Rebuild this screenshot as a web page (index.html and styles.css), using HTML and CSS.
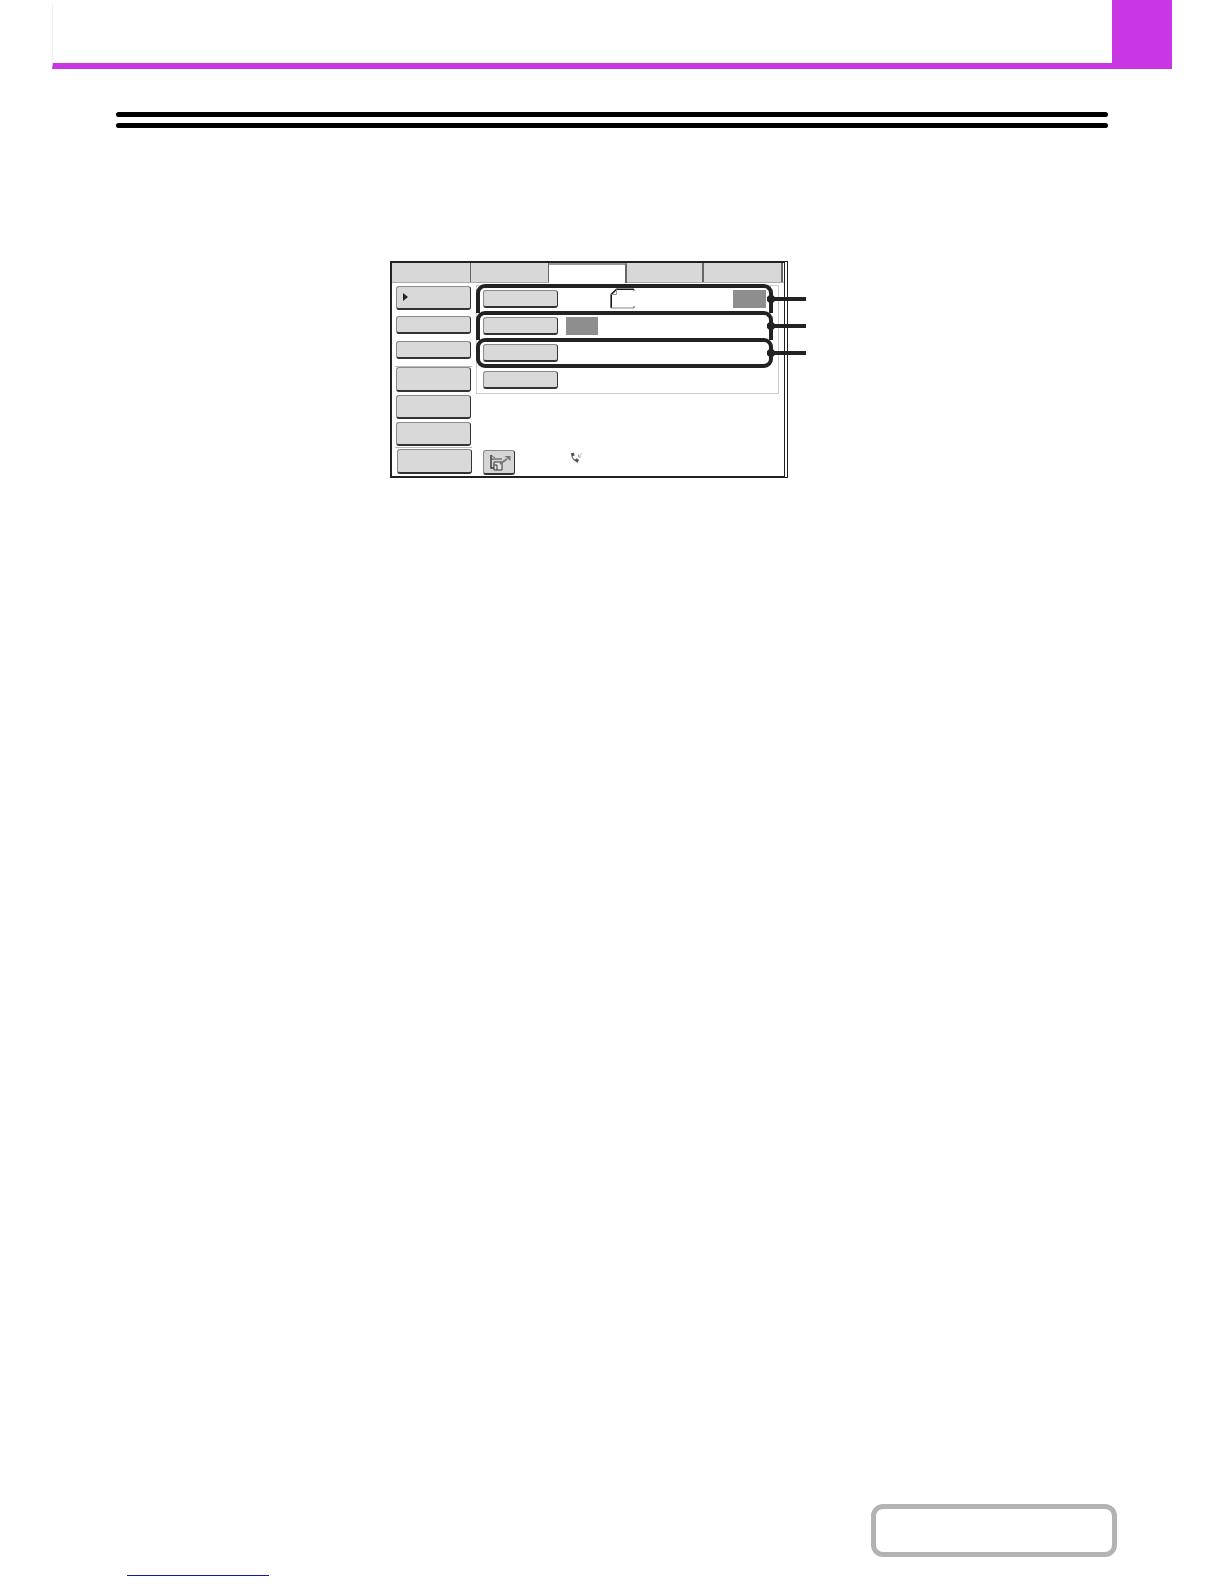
FILE: index.html
```html
<!DOCTYPE html>
<html lang="en">
<head>
<meta charset="utf-8">
<title>Screen</title>
<link rel="stylesheet" href="styles.css">
</head>
<body>
<header class="page-head">
  <div class="head-main"></div>
  <div class="head-tab"></div>
</header>
<div class="rule"></div>
<div class="rule rule-second"></div>

<section class="panel">
  <div class="tabs">
    <div class="tab tab-first"></div>
    <div class="tab tab-second"></div>
    <div class="tab tab-active"></div>
    <div class="tab tab-fourth"></div>
    <div class="tab tab-fifth"></div>
  </div>
  <div class="panel-body">
    <aside class="side">
      <div class="btn side-btn side-tall side-selected"><span class="arrow"></span></div>
      <div class="btn side-btn side-short gap-6"></div>
      <div class="btn side-btn side-short gap-7"></div>
      <div class="side-sep sep-one"></div>
      <div class="btn side-btn side-large"></div>
      <div class="btn side-btn side-tall gap-3"></div>
      <div class="btn side-btn side-tall gap-3"></div>
      <div class="side-sep sep-two"></div>
      <div class="btn side-btn side-last"></div>
    </aside>
    <div class="main">
      <div class="list">
        <div class="row">
          <div class="btn row-btn"></div>
          <svg class="paper" width="25" height="21" viewBox="0 0 25 21" aria-hidden="true">
            <path d="M1.2 20V6.5L6.5 1.2H24" fill="none" stroke="#1a1a1a" stroke-width="1.6"/>
            <path d="M6.5 1.5V6.5H1.5" fill="none" stroke="#999" stroke-width="1"/>
            <path d="M1 20H24" fill="none" stroke="#888" stroke-width="1"/>
            <path d="M24 1V3M24 18V20" fill="none" stroke="#555" stroke-width="1"/>
          </svg>
          <div class="fill fill-end"></div>
        </div>
        <div class="row">
          <div class="btn row-btn"></div>
          <div class="fill fill-start"></div>
        </div>
        <div class="row">
          <div class="btn row-btn"></div>
        </div>
        <div class="row">
          <div class="btn row-btn"></div>
        </div>
      </div>
      <div class="actions">
        <div class="btn icon-btn">
          <svg width="32" height="24" viewBox="0 0 32 24" aria-hidden="true">
            <path d="M8 5V18H11" fill="none" stroke="#333" stroke-width="1.4"/>
            <path d="M8 9H19" fill="none" stroke="#444" stroke-width="1"/>
            <path d="M8 5L12 8" fill="none" stroke="#666" stroke-width="1"/>
            <path d="M11 12H19V20H11Z" fill="#e6e6e6" stroke="#333" stroke-width="1"/>
            <path d="M11 15H14V20" fill="none" stroke="#333" stroke-width="1"/>
            <path d="M17 14L24 9" stroke="#777" stroke-width="2"/>
            <path d="M21.5 6H27.5V11Z" fill="#777"/>
          </svg>
        </div>
        <svg class="phone" width="13" height="12" viewBox="0 0 13 12" aria-hidden="true">
          <path d="M2 2C1 5 4 9 7.5 9.5" fill="none" stroke="#777" stroke-width="1.4"/>
          <path d="M0.6 1.5L3.5 0.4L4.8 3.2L2.5 4.6Z" fill="#555"/>
          <path d="M4.5 8L6.5 6.2L9 8L7.5 11Z" fill="#555"/>
          <path d="M12 1.5L8.5 5M8.5 2.5V5H11" fill="none" stroke="#999" stroke-width="0.8"/>
        </svg>
      </div>
    </div>
  </div>
  <div class="frame frame-one"></div>
  <div class="frame frame-two"></div>
  <div class="frame frame-three"></div>
  <div class="lead lead-one"></div>
  <div class="lead lead-two"></div>
  <div class="lead lead-three"></div>
</section>

<footer class="page-foot">
  <div class="foot-link"></div>
  <div class="foot-box"></div>
</footer>
</body>
</html>
```

FILE: styles.css
```css
* {
  box-sizing: border-box;
}

html,
body {
  margin: 0;
  padding: 0;
  background: #fff;
}

body {
  width: 1224px;
  height: 1584px;
  overflow: hidden;
  font-family: "Liberation Sans", Arial, sans-serif;
}

/* Page header */
.page-head {
  display: flex;
  width: 1120px;
  height: 69px;
  margin-left: 52px;
}

.head-main {
  flex: 1;
  margin-top: 4px;
  border-left: 1px solid #eee;
  border-bottom: 6px solid #c936e3;
}

.head-tab {
  width: 60px;
  background: #c936e3;
}

/* Heading rules */
.rule {
  width: 992px;
  height: 5px;
  margin: 43px 0 0 116px;
  border-radius: 3px;
  background: #000;
}

.rule-second {
  margin-top: 6px;
}

/* Screen panel */
.panel {
  position: relative;
  width: 398px;
  height: 217px;
  margin: 133px 0 0 390px;
  border: 2px solid #222;
  border-right: 4px double #222;
}

.tabs {
  display: flex;
  height: 20px;
  border-bottom: 1px solid #aaa;
}

.tab {
  position: relative;
  height: 19px;
  background: #d8d8d8;
  border-right: 2px solid #666;
}

.tab-first { width: 79px; border-right-width: 1px; }
.tab-second { width: 78px; border-right-width: 1px; }
.tab-active {
  width: 78px;
  height: 20px;
  background: #fff;
  border-top: 2px solid #999;
}
.tab-fourth { width: 77px; }
.tab-fifth { width: 79px; }

.panel-body {
  display: flex;
}

.side {
  display: flex;
  flex-direction: column;
  width: 80px;
  padding: 3px 0 0 4px;
}

.btn {
  background: #d9d9d9;
  border: 1px solid #8a8a8a;
  border-right-color: #333;
  border-bottom: 2px solid #333;
  border-radius: 3px;
}

.side-btn {
  width: 75px;
  flex: none;
}

.side-tall { height: 24px; }
.side-short { height: 18px; }
.side-large { height: 25px; }
.side-last {
  width: 75px;
  height: 25px;
  margin-left: 1px;
}

.gap-7 { margin-top: 7px; }
.gap-6 { margin-top: 6px; }
.gap-3 { margin-top: 3px; }

.side-selected {
  display: flex;
  align-items: center;
  padding-left: 6px;
}

.arrow {
  width: 0;
  height: 0;
  margin-bottom: 2px;
  border-left: 5px solid #222;
  border-top: 4.5px solid transparent;
  border-bottom: 4.5px solid transparent;
}

.side-sep {
  flex: none;
  width: 77px;
  height: 1px;
  margin-left: -1px;
  background: #bbb;
}

.sep-one { margin-top: 7px; }
.sep-two { margin-top: 1px; margin-bottom: 1px; }

.main {
  width: 303px;
  margin-left: 4px;
}

.list {
  height: 109px;
  margin-top: 2px;
  padding: 4px 0 0 6px;
  border: 1px solid #ccc;
}

.row {
  display: flex;
  align-items: flex-start;
  height: 27px;
}

.row-btn {
  flex: none;
  width: 75px;
  height: 18px;
}

.paper {
  flex: none;
  margin: -2px 0 0 52px;
}

.fill {
  flex: none;
  height: 18px;
  background: #8e8e8e;
}

.fill-end {
  width: 33px;
  margin-left: auto;
  margin-right: 12px;
}

.fill-start {
  width: 32px;
  margin-left: 8px;
}

.actions {
  display: flex;
  align-items: flex-start;
  margin: 56px 0 0 7px;
}

.icon-btn {
  display: flex;
  flex: none;
  width: 32px;
  height: 25px;
  overflow: hidden;
  background: #d6d6d6;
}

.icon-btn svg {
  flex: none;
  margin: -1px 0 0 -1px;
}

.phone {
  flex: none;
  margin: 2px 0 0 55px;
}

/* Callout frames drawn over the panel */
.frame {
  position: absolute;
  left: 84px;
  width: 297px;
  border: 4px solid #222;
  border-radius: 9px;
}

.frame-one {
  top: 21px;
  height: 29px;
  border-bottom: 0;
  border-radius: 9px 9px 0 0;
}

.frame-two {
  top: 48px;
  height: 29px;
  border-bottom: 0;
  border-radius: 9px 9px 0 0;
}

.frame-three {
  top: 75px;
  height: 30px;
}

/* Leader lines with round ends, over the frames */
.lead {
  position: absolute;
  left: 375px;
  width: 39px;
  height: 4px;
  background: #222;
}

.lead::before {
  content: "";
  position: absolute;
  left: 0;
  top: -2px;
  width: 8px;
  height: 8px;
  border-radius: 50%;
  background: #222;
}

.lead-one { top: 34px; }
.lead-two { top: 61px; }
.lead-three { top: 88px; }

/* Footer */
.page-foot {
  position: relative;
  display: flex;
  align-items: flex-start;
  margin-top: 1026px;
  padding-left: 871px;
}

.foot-box {
  width: 246px;
  height: 53px;
  border: 5px solid #b3b3b3;
  border-radius: 12px;
  background: #fff;
}

.foot-link {
  position: absolute;
  left: 127px;
  top: 71px;
  width: 142px;
  height: 1px;
  background: #1a1aa6;
}
```
